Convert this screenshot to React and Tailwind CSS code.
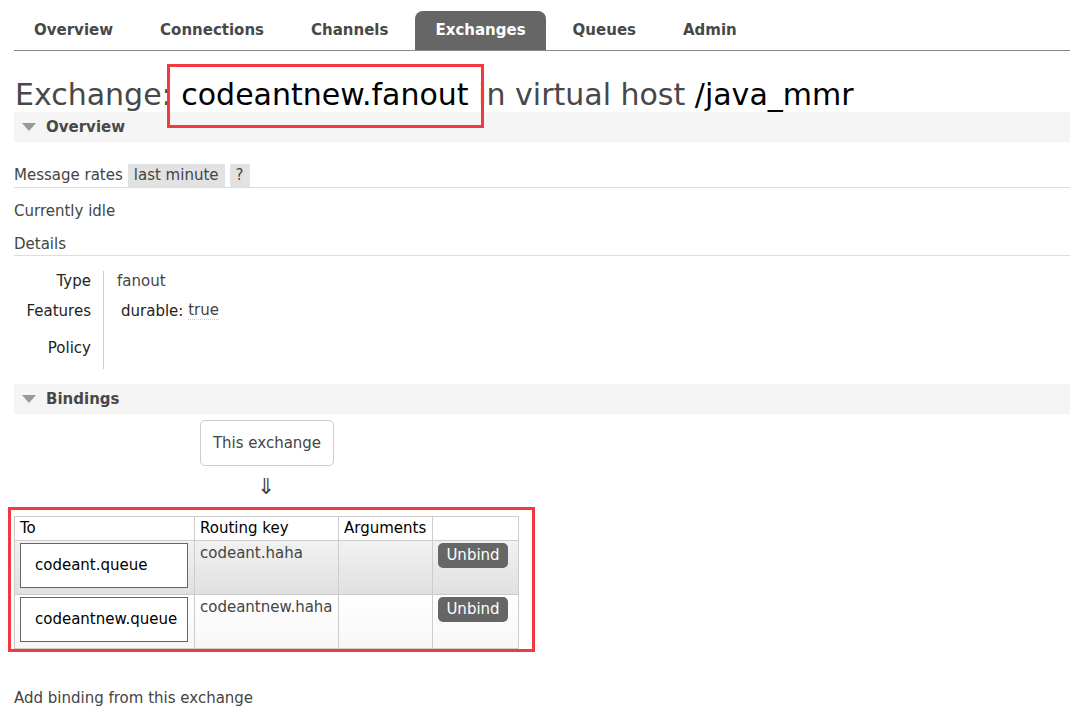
import React from "react";

const font = { fontFamily: '"DejaVu Sans", Verdana, sans-serif' };

function Tab({ label, active }) {
  return (
    <div
      className={
        "h-[39px] px-5 flex items-center rounded-t-[8px] text-[15px] font-bold " +
        (active ? "bg-[#666] text-white" : "text-[#484848]")
      }
    >
      {label}
    </div>
  );
}

function SectionHeader({ label }) {
  return (
    <div className="h-[30px] bg-[#f5f5f5] flex items-center pl-[8px]">
      <svg width="14" height="8" viewBox="0 0 14 8" className="mr-[10px]">
        <polygon points="0,0 14,0 7,8" fill="#999" />
      </svg>
      <span className="text-[15px] font-bold text-[#484848]">{label}</span>
    </div>
  );
}

function QueueBox({ name }) {
  return (
    <div className="h-[45px] w-[168px] border border-[#666] bg-white flex items-center pl-[14px] text-[15px] text-black">
      {name}
    </div>
  );
}

function UnbindBtn() {
  return (
    <div className="h-[25px] w-[70px] rounded-[5px] bg-[#666] text-white text-[15px] flex items-center justify-center">
      Unbind
    </div>
  );
}

export default function App() {
  return (
    <div
      className="w-[1070px] h-[710px] bg-white overflow-hidden text-[#444] pl-[14px] text-[15px]"
      style={font}
    >
      {/* Tabs */}
      <div className="h-[51px] pt-[11px] flex items-end gap-[7px] border-b border-[#888]">
        <Tab label="Overview" />
        <Tab label="Connections" />
        <Tab label="Channels" />
        <Tab label="Exchanges" active />
        <Tab label="Queues" />
        <Tab label="Admin" />
      </div>

      {/* Heading */}
      <div className="h-[61px] flex items-end pl-[1px] pb-[2px] text-[30px] leading-none">
        <span className="text-[#484848]">Exchange:&nbsp;</span>
        <span className="relative text-black">
          codeantnew.fanout
          <span className="absolute left-[-14px] right-[-15px] top-[-16px] bottom-[-18px] border-[3px] border-[#f03a3f] z-10"></span>
        </span>
        <span className="text-[#484848]">&nbsp;in virtual host&nbsp;</span>
        <span className="text-black">/java_mmr</span>
      </div>

      <SectionHeader label="Overview" />

      <div className="mt-[22px] flex items-center h-[23px] border-b border-[#ddd] box-content">
        <span className="mr-[5px]">Message rates</span>
        <span className="bg-[#e2e2e2] h-[23px] px-[6px] flex items-center">last minute</span>
        <span className="bg-[#e2e2e2] h-[23px] px-[6px] ml-[5px] flex items-center">?</span>
      </div>

      <div className="mt-[13px] h-[20px] flex items-center">Currently idle</div>

      <div className="mt-[12px] h-[22px] flex items-center border-b border-[#ddd] box-content">
        Details
      </div>

      <div className="mt-[15px] flex">
        <div className="w-[90px] flex flex-col items-end pr-[12px] border-r border-[#ccc] text-[#222]">
          <div className="h-[20px] flex items-center">Type</div>
          <div className="h-[20px] mt-[10px] flex items-center">Features</div>
          <div className="h-[20px] mt-[17px] flex items-center mb-[11px]">Policy</div>
        </div>
        <div className="pl-[13px]">
          <div className="h-[20px] flex items-center">fanout</div>
          <div className="h-[20px] mt-[10px] flex items-center pl-[4px]">
            <span className="text-[#222]">durable:&nbsp;</span>
            <span className="border-b border-dotted border-[#ccc] leading-[17px]">true</span>
          </div>
        </div>
      </div>

      <div className="mt-[15px]">
        <SectionHeader label="Bindings" />
      </div>

      {/* Bindings diagram */}
      <div className="flex flex-col items-start">
        <div className="ml-[186px] mt-[6px] h-[46px] w-[134px] border border-[#ccc] rounded-[5px] flex items-center justify-center">
          This exchange
        </div>
        <div className="ml-[243px] h-[41px] text-[22px] text-[#444] flex items-center">⇓</div>

        <div className="-ml-[6px] border-[3px] border-[#f03a3f] pt-[6px] pl-[3px] pr-[13px] pb-[0px]">
          <table className="border-collapse">
            <thead>
              <tr className="h-[23px]">
                <th className="w-[180px] border border-[#ccc] text-left font-normal px-[5px] text-black">To</th>
                <th className="w-[144px] border border-[#ccc] text-left font-normal px-[5px] text-black">Routing key</th>
                <th className="w-[94px] border border-[#ccc] text-left font-normal px-[5px] text-black">Arguments</th>
                <th className="w-[86px] border border-[#ccc]"></th>
              </tr>
            </thead>
            <tbody>
              <tr className="h-[54px] bg-gradient-to-b from-[#f2f2f2] to-[#e0e0e0]">
                <td className="border border-[#ccc] px-[5px] py-[2px] align-top">
                  <QueueBox name="codeant.queue" />
                </td>
                <td className="border border-[#ccc] px-[5px] align-top pt-[1px]">codeant.haha</td>
                <td className="border border-[#ccc]"></td>
                <td className="border border-[#ccc] align-top pt-[2px] pl-[5px]">
                  <UnbindBtn />
                </td>
              </tr>
              <tr className="h-[54px] bg-gradient-to-b from-[#ffffff] to-[#f7f7f7]">
                <td className="border border-[#ccc] px-[5px] py-[2px] align-top">
                  <QueueBox name="codeantnew.queue" />
                </td>
                <td className="border border-[#ccc] px-[5px] align-top pt-[1px]">codeantnew.haha</td>
                <td className="border border-[#ccc]"></td>
                <td className="border border-[#ccc] align-top pt-[2px] pl-[5px]">
                  <UnbindBtn />
                </td>
              </tr>
            </tbody>
          </table>
        </div>
      </div>

      <div className="mt-[35px]">Add binding from this exchange</div>
    </div>
  );
}
